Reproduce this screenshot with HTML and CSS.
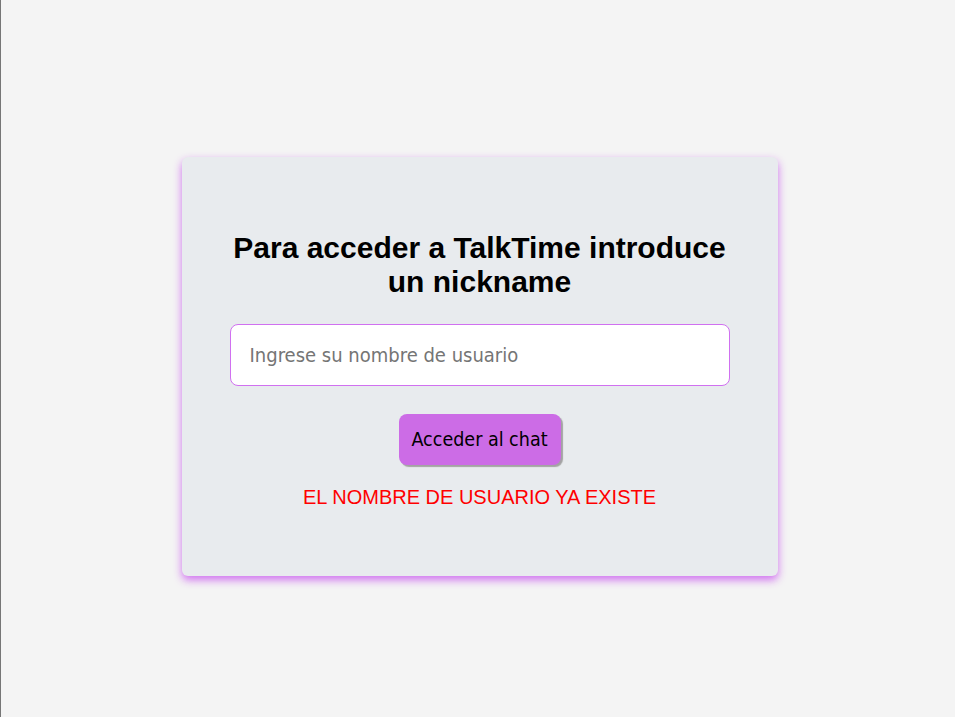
FILE: index.html
```html
<!DOCTYPE html>
<html lang="es">
<head>
<meta charset="utf-8">
<title>TalkTime</title>
<link rel="stylesheet" href="styles.css">
</head>
<body>
<div class="page">
  <div class="card">
    <h1 class="title">Para acceder a TalkTime introduce un nickname</h1>
    <input class="nick" type="text" placeholder="Ingrese su nombre de usuario">
    <button class="enter" type="button">Acceder al chat</button>
    <p class="error">EL NOMBRE DE USUARIO YA EXISTE</p>
  </div>
</div>
</body>
</html>
```
FILE: styles.css
```css
html, body {
  margin: 0;
  padding: 0;
}
body {
  background: #f4f4f4;
  font-family: "Liberation Sans", Arial, sans-serif;
}
.page {
  box-sizing: border-box;
  min-height: 100vh;
  border-left: 1px solid #767676;
  padding: 16px 0 0 3px;
  display: flex;
  align-items: center;
  justify-content: center;
}
.card {
  box-sizing: border-box;
  width: 596px;
  height: 419px;
  background: #e8ebee;
  border-radius: 6px;
  box-shadow: 0 4px 8px rgba(205, 100, 240, 0.9);
  padding: 74px 40px 0;
  display: flex;
  flex-direction: column;
  align-items: center;
}
.title {
  margin: 0;
  font-size: 30px;
  line-height: 34px;
  font-weight: bold;
  text-align: center;
  color: #000;
}
.nick {
  box-sizing: border-box;
  margin-top: 25px;
  width: 500px;
  height: 62px;
  border: 1px solid #d070f0;
  border-radius: 8px;
  background: #fff;
  padding: 0 19px;
  font-family: "DejaVu Sans Condensed", "DejaVu Sans", sans-serif;
  font-size: 20px;
  outline: none;
}
.nick::placeholder {
  color: #757575;
}
.enter {
  margin-top: 28px;
  box-sizing: border-box;
  width: 162px;
  height: 51px;
  background: #cc6ce6;
  border: none;
  border-radius: 8px;
  box-shadow: 2px 2px 1px #a3a3a3;
  font-family: "DejaVu Sans Condensed", "DejaVu Sans", sans-serif;
  font-size: 19.5px;
  color: #000;
  padding: 0;
}
.error {
  margin: 20px 0 0;
  color: #ff0000;
  font-size: 20px;
  line-height: 24px;
}
```
